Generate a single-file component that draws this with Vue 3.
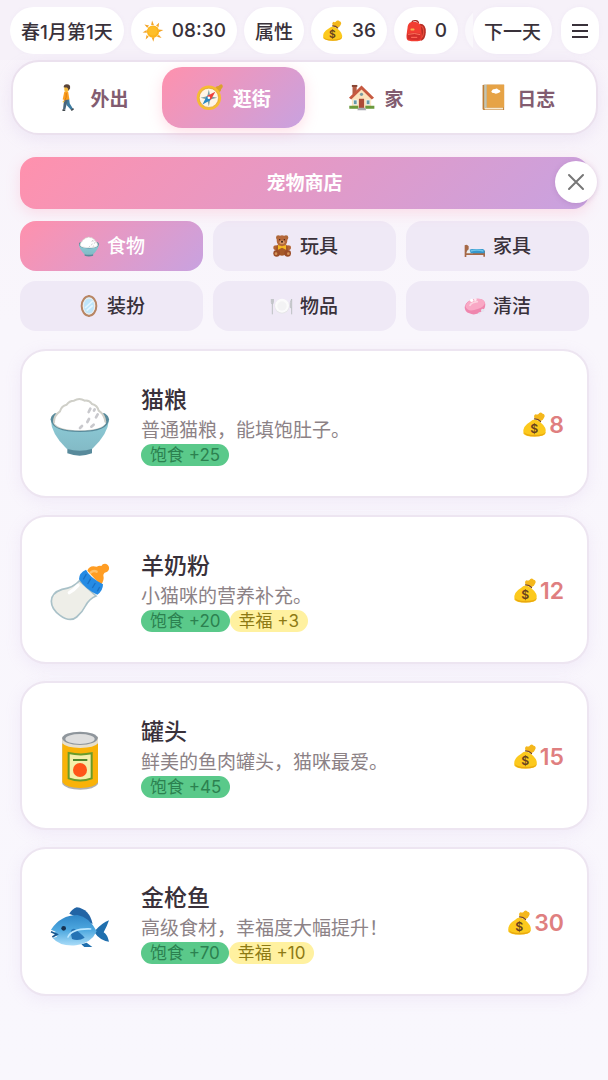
<template>
    <div class="page">
        <!-- ícones -->
        <svg class="sprite" width="0" height="0" aria-hidden="true">
            <defs>
                <linearGradient id="fishBody" x1="0" y1="0" x2="0" y2="1">
                    <stop offset="0" stop-color="#2f86c8" />
                    <stop offset="0.5" stop-color="#4fa9e0" />
                    <stop offset="1" stop-color="#a9dcf8" />
                </linearGradient>
                <linearGradient id="bowlBody" x1="0" y1="0" x2="0" y2="1">
                    <stop offset="0" stop-color="#8ccbd6" />
                    <stop offset="1" stop-color="#83bac6" />
                </linearGradient>
            </defs>
            <symbol id="rice" viewBox="-6 -13 192 192">
                <path d="M52 150h74v18q-37 14-74 0z" fill="#588a9b" />
                <path d="M2 66Q4 112 50 154q40 12 77 0Q174 112 177 66z" fill="url(#bowlBody)" />
                <path d="M2 66q0-10 12-18h150q12 8 13 18-2 38-87 38T2 66z" fill="#588a9b" />
                <path d="M12 74q0-20 18-32 4-16 20-20 8-12 22-12 16-10 32 0 14-2 22 10 16 4 20 20 18 12 20 34-6 23-77 23T12 74z" fill="#fff" stroke="#cfcfc8" stroke-width="6" />
                <path d="M15 76q14 19 75 20 62-1 75-20" fill="none" stroke="#fff" stroke-width="6" />
                <path d="M116 44l5-10M138 60l5-9M112 74l5-9M124 88l7-6M90 92l6-6M132 40l2-4" stroke="#c9c9cd" stroke-width="8" stroke-linecap="round" />
            </symbol>
            <symbol id="bottle" viewBox="-6 -13 192 192">
                <path d="M88 52Q72 72 36 78 4 88 4 114q0 24 26 42 30 22 50 5 17-14 28-36 10-18 30-27z" fill="#eeeee8" stroke="#a9c1c8" stroke-width="5" />
                <path d="M84 66q-12 14-26 22" stroke="#fff" stroke-width="10" stroke-linecap="round" fill="none" />
                <path d="M112 22q6-18 28-12 8-4 14-2 4-8 15-6 10 5 8 16-4 10-13 10-4 4-4 8 4 16-8 30z" fill="#ff9d23" />
                <path d="M122 28q8-8 18-3" stroke="#ffc169" stroke-width="7" stroke-linecap="round" fill="none" />
                <path d="M87 48q0-20 21-29 10 22 51 44 0 20-17 31-34-14-55-46z" fill="#258be4" />
                <path d="M100 48l9-16M113 62l9-16M127 74l9-15M142 84l7-13" stroke="#1a70c4" stroke-width="4" />
            </symbol>
            <symbol id="can" viewBox="-6 -13 192 192">
                <path d="M37 22v142q12 17 54 17t53-17V22z" fill="#b0b0b0" />
                <path d="M37 42v117q12 17 54 17t53-17V42z" fill="#f9b208" />
                <path d="M37 26v16q12 14 54 14t53-14V26z" fill="#e6dfce" />
                <ellipse cx="90" cy="27" rx="53" ry="20" fill="#8f969c" />
                <ellipse cx="90" cy="29" rx="44" ry="15" fill="#dedede" />
                <path d="M56 71q34 8 69 1v75q-34 13-69 0z" fill="#f4efaa" stroke="#699b29" stroke-width="6" />
                <path d="M69 92h43" stroke="#4f842c" stroke-width="6" />
                <circle cx="90" cy="122" r="21" fill="#ff5418" />
            </symbol>
            <symbol id="fish" viewBox="-6 -10 192 192">
                <path d="M58 58q8-14 22-19 38 5 48 50z" fill="#2264a5" />
                <path d="M94 150l16-5 17 13h-24zM132 112Q158 84 177 78q-6 18-16 36 12 8 16 28-28-4-45-30z" fill="#1f6fae" />
                <path d="M3 106Q32 62 82 62q36 6 58 49-16 36-62 42-48 4-70-22l14-4-12-9 7-6z" fill="url(#fishBody)" />
                <path d="M66 134q-10-34 8-30 22 16 30 26-18 11-38 4z" fill="#2573b5" />
                <path d="M54 128q12-26 68-24" stroke="#bce7ff" stroke-width="5" stroke-linecap="round" fill="none" />
                <path d="M3 112l18 8-14 8" stroke="#1a578e" stroke-width="5" fill="none" />
                <circle cx="41" cy="102" r="7" fill="#163251" />
            </symbol>
            <symbol id="money" viewBox="0 0 72 72">
                <path d="M35 18q-4-8 2-12 4 2 8 0 4-6 9-4 3 3 7 4 4 4 0 10-2 6-9 9z" fill="#f4b71c" />
                <path d="M34 21q10 1 16 7 20 16 15 31-3 9-29 9T4 60q-4-20 18-32 6-6 12-7z" fill="#fcc91d" />
                <path d="M5 55q3 8 29 9 27 0 32-9-2 13-31 13T5 55z" fill="#e9a80f" />
                <path d="M35 19q10 0 16 7" stroke="#724226" stroke-width="4" stroke-linecap="round" fill="none" />
            </symbol>
            <symbol id="sun" viewBox="0 0 72 72">
                <path d="M33 2l6 14h-9zM56 9l-2 15-8-6zM70 33L55 40l-1-9zM64 59l-15-4 6-7zM37 71l-5-14 9-1zM12 64l3-15 7 6zM2 41l13-8 1 9zM8 15l15 3-6 7z" fill="#f3a427" />
                <circle cx="36" cy="38" r="20" fill="#fcb41b" />
                <circle cx="35" cy="36" r="15" fill="#ffc533" opacity="0.6" />
            </symbol>
            <symbol id="backpack" viewBox="0 0 72 72">
                <path d="M49 12q20 0 19 28-1 22-14 28l-8-4z" fill="#b72d25" />
                <path d="M54 20q8 6 7 22-2 14-9 16" stroke="#e64e3d" stroke-width="4" fill="none" />
                <path d="M22 8q2-7 13-6 9 1 9 9" stroke="#a42820" stroke-width="4" fill="none" />
                <path d="M9 20Q12 6 28 6t24 12l3 32q1 15-5 18-20 4-40-1-6-3-5-17z" fill="#f23d32" />
                <path d="M7 45q22-7 45 0l-1 18q-20 6-43-1z" fill="#d32e2b" />
                <path d="M10 47q22-6 40 1" stroke="#ff7b61" stroke-width="3" fill="none" />
                <rect x="18" y="28" width="13" height="6" rx="2" fill="#f5b34e" />
                <path d="M20 57h20" stroke="#ff6454" stroke-width="4" />
            </symbol>
            <symbol id="walker" viewBox="0 0 84 84">
                <path d="M34 46h13l2 15 10 16-6 4-14-16z" fill="#3d7ba0" />
                <path d="M34 46h10l-5 18-4 16-7-1 2-18z" fill="#49657b" />
                <path d="M27 78l9 3-2 3h-8zM52 80l8-5 2 4-7 5z" fill="#444b50" />
                <path d="M32 24q7-5 12 0l4 24-14 2-7-2z" fill="#fa9e1e" />
                <path d="M38 28q2 14-5 25" stroke="#d97911" stroke-width="3" fill="none" />
                <path d="M31 52l-3 5" stroke="#f3c241" stroke-width="4" />
                <path d="M32 8q12-4 15 5l-2 9-8 2-5-4z" fill="#f5bb3b" />
                <path d="M30 10q0-9 10-9 12 0 10 13l-5 7q-1-8-5-10-6 0-10-1z" fill="#594439" />
            </symbol>
            <symbol id="compass" viewBox="0 0 84 84">
                <path d="M60 14q0-8 10-8 8-8 12-3 4 6-4 13 1 8-6 10z" fill="#dba12d" />
                <circle cx="40" cy="43" r="38" fill="#f6bd32" />
                <circle cx="40" cy="43" r="30" fill="#fff5e6" stroke="#dc982d" stroke-width="2" />
                <path d="M40 17l4 21 22 5-22 5-4 22-5-22-21-5 21-5z" fill="#7da0a4" />
                <path d="M60 24L46 50l-12-13z" fill="#ed403a" />
                <path d="M20 64l14-27 12 13z" fill="#2889c4" />
                <circle cx="40" cy="43" r="4" fill="#fff" />
            </symbol>
            <symbol id="house" viewBox="0 0 84 84">
                <path d="M14 6h13v26H14z" fill="#b65e45" />
                <path d="M12 3h17v6H12z" fill="#884634" />
                <path d="M12 42L42 12l30 30v34H12z" fill="#fbe2bd" />
                <path d="M3 43L42 5l39 38-7 5-32-31L10 48z" fill="#c75940" />
                <path d="M34 46h16v34H34z" fill="#ad4a37" />
                <path d="M17 50h11v14H17zM57 50h11v14H57z" fill="#6599a7" stroke="#fff" stroke-width="2" />
                <path d="M4 68h28v9H4zM54 68h28v9H54z" fill="#6b9a3c" />
                <path d="M32 74h21l4 8H29z" fill="#a9a9ae" />
                <circle cx="42" cy="32" r="5" fill="#7b9ba0" />
            </symbol>
            <symbol id="book" viewBox="0 0 84 84">
                <path d="M8 5q0-3 4-3h63v79H12q-4 0-4-4z" fill="#be7e36" />
                <path d="M13 73h59v6H15z" fill="#f8ead0" />
                <path d="M21 2h54v71H21z" fill="#e6a346" />
                <path d="M13 2h8v72h-8z" fill="#c3c5b3" />
                <path d="M35 23q5-8 11-7 7-4 10 1 9 2 7 8-5 3-8 4-7 3-11-1-7 1-9-5z" fill="#fff" />
            </symbol>
            <symbol id="teddy" viewBox="0 0 66 66">
                <circle cx="22" cy="8" r="7" fill="#ac6637" />
                <circle cx="45" cy="8" r="7" fill="#ac6637" />
                <ellipse cx="16" cy="38" rx="9" ry="7" fill="#b36434" />
                <ellipse cx="51" cy="38" rx="9" ry="7" fill="#b36434" />
                <ellipse cx="33" cy="43" rx="18" ry="19" fill="#a65929" />
                <circle cx="33" cy="17" r="16" fill="#b5683b" />
                <circle cx="17" cy="55" r="10" fill="#9b4c27" />
                <circle cx="50" cy="55" r="10" fill="#9b4c27" />
                <circle cx="15" cy="56" r="4" fill="#d69459" />
                <circle cx="52" cy="56" r="4" fill="#d69459" />
                <ellipse cx="33" cy="22" rx="8" ry="6" fill="#d79764" />
                <path d="M21 30l12 4 12-4v14l-12-6-12 6z" fill="#f6b922" />
                <circle cx="26" cy="14" r="2" fill="#3b2117" />
                <circle cx="40" cy="14" r="2" fill="#3b2117" />
                <circle cx="33" cy="20" r="3" fill="#3b2117" />
            </symbol>
            <symbol id="bed" viewBox="0 0 66 66">
                <path d="M2 31q7-5 12 3v20h46v-7h3v18h-5v-5H7v6H2z" fill="#a66846" />
                <path d="M9 48q4-8 12-4l6 11H7z" fill="#e6eef2" />
                <path d="M17 44q4-3 12-2h27q6 1 6 6v7H20z" fill="#3597cc" />
                <path d="M20 48q18-6 38 0" stroke="#6fc3e8" stroke-width="4" fill="none" />
            </symbol>
            <symbol id="mirror" viewBox="0 0 66 66">
                <path d="M25 5l8-5 8 5zM25 60l8 6 8-6z" fill="#a96d44" />
                <ellipse cx="33" cy="33" rx="22" ry="29" fill="#bee5fa" stroke="#b98562" stroke-width="6" />
                <ellipse cx="33" cy="33" rx="17" ry="24" fill="none" stroke="#f4ede8" stroke-width="3" />
                <path d="M21 39l23-21M26 47l18-16" stroke="#e3f6ff" stroke-width="5" />
            </symbol>
            <symbol id="plate" viewBox="0 0 66 66">
                <circle cx="33" cy="34" r="22" fill="#e6e6e8" />
                <circle cx="33" cy="32" r="21" fill="#fbfbfb" />
                <circle cx="33" cy="33" r="14" fill="#f3f3f4" />
                <path d="M1 12v10q0 5 3 5t3-5V12M4 12v46M62 58V12q-6 9-4 26h4" fill="none" stroke="#bdc1c3" stroke-width="3" />
            </symbol>
            <symbol id="soap" viewBox="0 0 66 66">
                <path d="M2 36Q6 16 32 12q29-4 32 15 0 17-14 24-18 12-34 4Q2 51 2 36z" fill="#ef86ae" />
                <path d="M4 33Q10 16 32 12q26-4 31 12-4 13-22 18Q10 54 4 33z" fill="#f9a8c5" />
                <path d="M18 31q5-9 22-11" stroke="#fcd2df" stroke-width="5" stroke-linecap="round" fill="none" />
                <circle cx="23" cy="16" r="5" fill="#fff" />
                <circle cx="34" cy="14" r="4" fill="#fde9f0" />
                <circle cx="56" cy="46" r="5" fill="#e4e6f0" />
                <circle cx="46" cy="55" r="3" fill="#dfe4ef" />
            </symbol>
        </svg>

        <header class="topbar">
            <div class="status">
                <span class="pill">春1月第1天</span>
                <span class="pill"><svg class="icon-s"><use href="#sun" /></svg>08:30</span>
                <button class="pill">属性</button>
                <span class="pill">
                    <svg class="icon-s" viewBox="0 0 72 72"><use href="#money" /><text x="34" y="58" text-anchor="middle" class="coin">$</text></svg>{{ coins }}
                </span>
                <button class="pill"><svg class="icon-s"><use href="#backpack" /></svg>0</button>
                <span class="pill faded"></span>
            </div>
            <div class="actions">
                <button class="pill">下一天</button>
                <button class="pill menu" aria-label="菜单">
                    <svg width="16" height="16" viewBox="0 0 16 16"><path d="M0 2h16M0 8h16M0 14h16" stroke="#39313a" stroke-width="2" /></svg>
                </button>
            </div>
        </header>

        <nav class="tabs">
            <button v-for="tab in tabs" :key="tab.icon" class="tab" :class="{ active: tab.icon === currentTab }" @click="currentTab = tab.icon">
                <svg class="icon-m"><use :href="'#' + tab.icon" /></svg>{{ tab.label }}
            </button>
        </nav>

        <main class="shop">
            <div class="banner">
                <h1 class="label">宠物商店</h1>
                <button class="close" aria-label="关闭">
                    <svg width="16" height="16" viewBox="0 0 16 16"><path d="M1 1l14 14M15 1L1 15" stroke="#777" stroke-width="2" stroke-linecap="round" /></svg>
                </button>
            </div>

            <div class="categories">
                <button v-for="cat in categories" :key="cat.icon" class="category" :class="{ active: cat.icon === currentCategory }" @click="currentCategory = cat.icon">
                    <svg class="icon-s"><use :href="'#' + cat.icon" /></svg>
                    <span class="label">{{ cat.label }}</span>
                </button>
            </div>

            <div class="items">
                <article class="card" v-for="item in items" :key="item.name">
                    <div class="picture"><svg><use :href="'#' + item.icon" /></svg></div>
                    <div class="info">
                        <h2>{{ item.name }}</h2>
                        <p>{{ item.desc }}</p>
                        <div class="badges">
                            <span class="badge food">饱食 +{{ item.food }}</span>
                            <span class="badge happy" v-if="item.happy">幸福 +{{ item.happy }}</span>
                        </div>
                    </div>
                    <div class="price">
                        <svg viewBox="0 0 72 72"><use href="#money" /><text x="34" y="58" text-anchor="middle" class="coin">$</text></svg>{{ item.price }}
                    </div>
                </article>
            </div>
        </main>
    </div>
</template>

<script setup>
    import { ref } from 'vue';

    const coins = ref(36)
    const currentTab = ref('compass')
    const currentCategory = ref('rice')

    const tabs = [
        { icon: 'walker', label: '外出' },
        { icon: 'compass', label: '逛街' },
        { icon: 'house', label: '家' },
        { icon: 'book', label: '日志' },
    ]

    const categories = [
        { icon: 'rice', label: '食物' },
        { icon: 'teddy', label: '玩具' },
        { icon: 'bed', label: '家具' },
        { icon: 'mirror', label: '装扮' },
        { icon: 'plate', label: '物品' },
        { icon: 'soap', label: '清洁' },
    ]

    const items = [
        { icon: 'rice', name: '猫粮', desc: '普通猫粮，能填饱肚子。', food: 25, price: 8 },
        { icon: 'bottle', name: '羊奶粉', desc: '小猫咪的营养补充。', food: 20, happy: 3, price: 12 },
        { icon: 'can', name: '罐头', desc: '鲜美的鱼肉罐头，猫咪最爱。', food: 45, price: 15 },
        { icon: 'fish', name: '金枪鱼', desc: '高级食材，幸福度大幅提升！', food: 70, happy: 10, price: 30 },
    ]
</script>

<style>
    body {
        margin: 0;
        background: #f9f6fc;
    }
</style>

<style scoped>
    .page {
        min-height: 100vh;
        box-sizing: border-box;
        background: linear-gradient(180deg, #f8f3fa 0%, #f9f6fc 30%, #f9f7fd 100%);
        color: #39313a;
        font-family: Inter, "Noto Sans CJK SC", sans-serif;
        font-size: 19px;
        font-weight: 500;
    }

    .sprite {
        position: absolute;
    }

    symbol,
    svg {
        overflow: visible;
    }

    svg {
        flex: none;
    }

    .coin {
        font-size: 34px;
        font-weight: 600;
        fill: #67401f;
    }

    button {
        border: 0;
        margin: 0;
        padding: 0;
        font: inherit;
        color: inherit;
        cursor: pointer;
    }

    h1,
    h2,
    p {
        margin: 0;
    }

    .icon-s {
        width: 22px;
        height: 22px;
    }

    .icon-m {
        width: 27px;
        height: 27px;
    }

    .topbar {
        display: flex;
        padding: 7px 9px 6px 10px;
        background: #f6f1f9;
    }

    .status {
        display: flex;
        flex: 1;
        gap: 7px;
        min-width: 0;
        overflow: hidden;
    }

    .actions {
        display: flex;
        flex: none;
        gap: 9px;
    }

    .pill {
        display: flex;
        flex: none;
        align-items: center;
        justify-content: center;
        gap: 8px;
        box-sizing: border-box;
        height: 47px;
        padding: 0 11px;
        border-radius: 24px;
        background: #fff;
        white-space: nowrap;
        box-shadow: 0 0 4px rgba(180, 150, 200, 0.08);
    }

    .faded {
        width: 60px;
        opacity: 0.5;
    }

    .menu {
        width: 38px;
        padding: 0;
    }

    .tabs {
        display: flex;
        margin: 0 10px 0 11px;
        padding: 5px 7px;
        border: 2px solid #ebe1ee;
        border-radius: 28px;
        background: #fff;
        box-shadow: 0 4px 16px rgba(190, 160, 215, 0.18);
    }

    .tab {
        display: flex;
        flex: 1;
        align-items: center;
        justify-content: center;
        gap: 10px;
        height: 61px;
        border-radius: 20px;
        background: transparent;
        color: #825c70;
        font-weight: 600;
    }

    .active {
        background: linear-gradient(135deg, #ff91ad 0%, #c8a2e0 100%);
        color: #fff;
    }

    .tab.active {
        box-shadow: 0 4px 14px rgba(255, 145, 175, 0.3);
    }

    .shop {
        padding: 22px 19px 40px 20px;
    }

    .banner {
        position: relative;
        display: flex;
        align-items: center;
        justify-content: center;
        height: 52px;
        border-radius: 16px;
        background: linear-gradient(135deg, #ff91ad 0%, #c8a2e0 100%);
        color: #fff;
        box-shadow: 0 4px 14px rgba(255, 145, 175, 0.25);
    }

    .banner h1 {
        font-size: 19px;
        font-weight: 600;
    }

    .label {
        padding-bottom: 4px;
    }

    .close {
        position: absolute;
        top: 4px;
        right: -8px;
        display: flex;
        align-items: center;
        justify-content: center;
        width: 42px;
        height: 42px;
        border-radius: 50%;
        background: #fff;
        box-shadow: 0 1px 5px rgba(150, 100, 160, 0.3);
    }

    .categories {
        display: grid;
        grid-template-columns: repeat(3, 1fr);
        gap: 10px;
        margin-top: 12px;
    }

    .category {
        display: flex;
        align-items: center;
        justify-content: center;
        gap: 7px;
        height: 50px;
        border-radius: 16px;
        background: #efe9f6;
    }

    .category.active {
        background: linear-gradient(135deg, #ff91ad 0%, #c8a2e0 100%);
    }

    .items {
        display: grid;
        gap: 17px;
        margin-top: 18px;
    }

    .card {
        display: flex;
        align-items: center;
        box-sizing: border-box;
        min-height: 149px;
        padding: 2px 23px 0;
        border: 2px solid #ede5f1;
        border-radius: 26px;
        background: #fff;
        box-shadow: 0 4px 16px rgba(190, 165, 220, 0.14);
    }

    .picture {
        display: flex;
        justify-content: center;
        width: 70px;
        margin-right: 26px;
    }

    .picture svg {
        width: 64px;
        height: 64px;
    }

    .info {
        flex: 1;
    }

    .info h2 {
        font-size: 23px;
        font-weight: 500;
        line-height: 34px;
    }

    .info p {
        color: #8c8286;
        font-weight: 400;
        line-height: 27px;
    }

    .badges {
        display: flex;
    }

    .badge {
        padding: 0 9px;
        border-radius: 11px;
        font-size: 17px;
        font-weight: 400;
        line-height: 22px;
    }

    .food {
        background: #5ac98a;
        color: #2c8150;
    }

    .happy {
        background: #fff1a0;
        color: #8d7a14;
    }

    .price {
        display: flex;
        align-items: center;
        gap: 1px;
        color: #df7f80;
        font-size: 23px;
        font-weight: 600;
    }

    .price svg {
        width: 26px;
        height: 26px;
    }
</style>
